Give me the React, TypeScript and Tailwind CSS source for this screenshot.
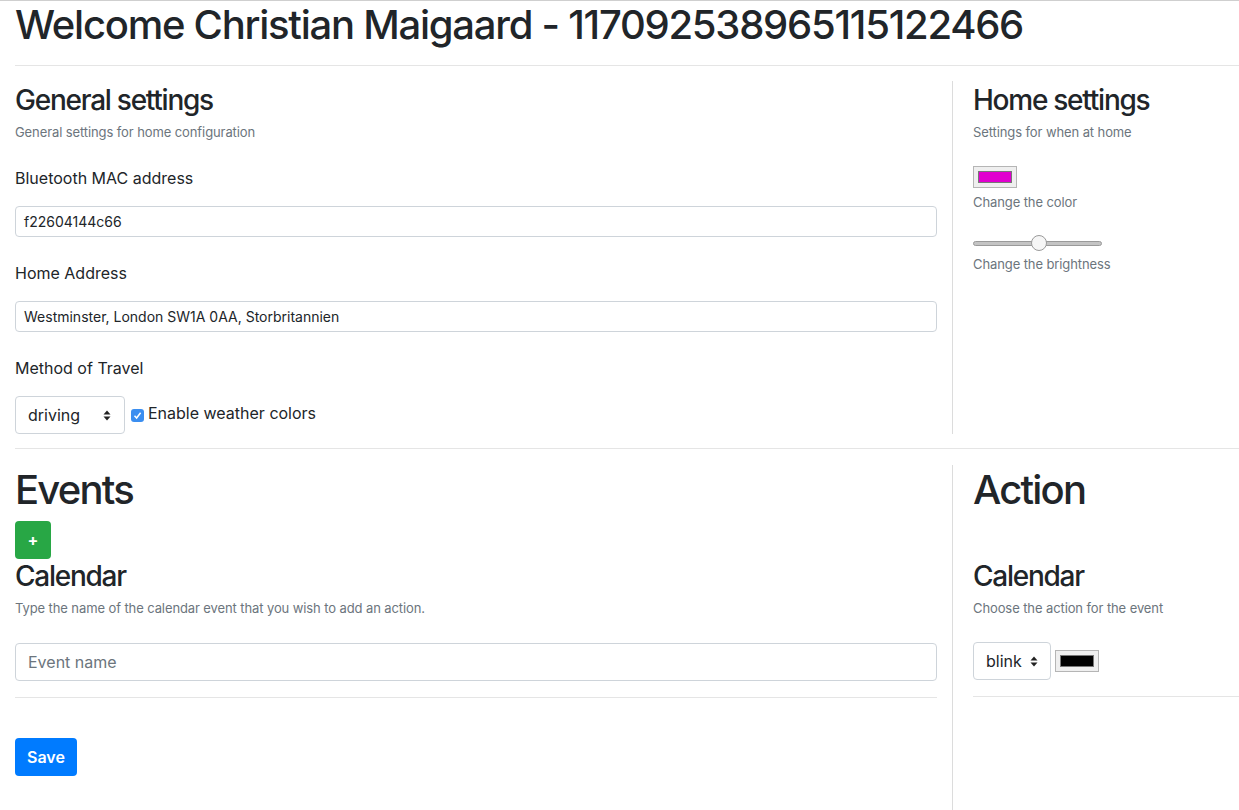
import React from 'react';

const font = { fontFamily: 'Inter, "Noto Sans", sans-serif' };

function Divider({ className = '' }: { className?: string }) {
  return <div className={`h-px bg-[#e5e5e5] ${className}`} />;
}

function ColorSwatch({ color }: { color: string }) {
  return (
    <div className="flex h-[22px] w-[44px] items-center justify-center border border-[#b5b5b5] bg-[#efefef]">
      <div className={`h-[12px] w-[34px] border border-[#777] ${color}`} />
    </div>
  );
}

function UpDown() {
  return (
    <svg width="8" height="11" viewBox="0 0 8 11" className="text-[#222]">
      <path d="M4 0.5 L7.5 4.5 H0.5 Z" fill="currentColor" />
      <path d="M4 10.5 L7.5 6.5 H0.5 Z" fill="currentColor" />
    </svg>
  );
}

export default function App() {
  return (
    <div className="min-h-[810px] border-t border-[#cfcfcf] bg-white text-[#212529]" style={font}>
      <h1 className="px-[15px] text-[40px] leading-[48px] font-medium tracking-[-1.25px]">
        Welcome Christian Maigaard - 117092538965115122466
      </h1>
      <Divider className="ml-[15px] mt-[16px]" />

      <div className="mt-[15px] flex">
        <div className="w-[952px] shrink-0 px-[15px] pt-[2px]">
          <h3 className="text-[28px] leading-[34px] font-medium tracking-[-1.25px]">General settings</h3>
          <p className="mt-[5px] text-[13px] leading-[20px] tracking-[-0.1px] text-[#6c757d]">General settings for home configuration</p>

          <label className="mt-[24px] block text-[16px] leading-[24px]">Bluetooth MAC address</label>
          <div className="mt-[16px] flex h-[31px] items-center rounded-[4px] border border-[#ced4da] px-[8px] text-[14px]">
            f22604144c66
          </div>

          <label className="mt-[24px] block text-[16px] leading-[24px]">Home Address</label>
          <div className="mt-[16px] flex h-[31px] items-center rounded-[4px] border border-[#ced4da] px-[8px] text-[14px]">
            Westminster, London SW1A 0AA, Storbritannien
          </div>

          <label className="mt-[24px] block text-[16px] leading-[24px]">Method of Travel</label>
          <div className="mt-[16px] flex items-center">
            <div className="flex h-[38px] w-[110px] items-center justify-between rounded-[4px] border border-[#ced4da] pl-[12px] pr-[13px] text-[16px]">
              <span>driving</span>
              <UpDown />
            </div>
            <span className="ml-[6px] flex h-[13px] w-[13px] items-center justify-center rounded-[3px] bg-[#3b8ef0]">
              <svg width="9" height="9" viewBox="0 0 9 9">
                <path d="M1.5 4.8 L3.6 7 L7.6 1.8" fill="none" stroke="white" strokeWidth="1.5" />
              </svg>
            </span>
            <span className="ml-[4px] -mt-[4px] text-[16px]">Enable weather colors</span>
          </div>
        </div>

        <div className="flex-1 border-l border-[#dcdcdc] pl-[20px] pt-[2px] pb-[2px]">
          <h3 className="text-[28px] leading-[34px] font-medium tracking-[-1.25px] whitespace-nowrap">Home settings</h3>
          <p className="mt-[5px] text-[13px] leading-[20px] tracking-[-0.1px] text-[#6c757d]">Settings for when at home</p>
          <div className="mt-[24px]">
            <ColorSwatch color="bg-[#e100cf]" />
          </div>
          <p className="mt-[4px] text-[13px] leading-[20px] tracking-[-0.1px] text-[#6c757d]">Change the color</p>
          <div className="relative mt-[23px] flex h-[16px] w-[129px] items-center">
            <div className="h-[5px] w-full rounded-full border border-[#9a9a9a] bg-[#c4c4c4]" />
            <div className="absolute left-[58px] top-0 h-[16px] w-[16px] rounded-full border border-[#9a9a9a] bg-[#f6f6f6]" />
          </div>
          <p className="mt-[3px] text-[13px] leading-[20px] tracking-[-0.1px] text-[#6c757d]">Change the brightness</p>
        </div>
      </div>

      <Divider className="ml-[15px] mt-[14px]" />

      <div className="mt-[16px] flex">
        <div className="w-[952px] shrink-0 px-[15px] pt-[1px] pb-[34px]">
          <h1 className="text-[40px] leading-[48px] font-medium tracking-[-1.8px]">Events</h1>
          <button className="mt-[7px] flex h-[38px] w-[36px] items-center justify-center rounded-[4px] bg-[#28a745] text-[16px] font-bold text-white">
            +
          </button>
          <h3 className="text-[28px] leading-[34px] font-medium tracking-[-1.25px]">Calendar</h3>
          <p className="mt-[5px] text-[13px] leading-[20px] tracking-[-0.1px] text-[#6c757d]">
            Type the name of the calendar event that you wish to add an action.
          </p>
          <div className="mt-[25px] flex h-[38px] items-center rounded-[4px] border border-[#ced4da] px-[12px] text-[16px] text-[#6c757d]">
            Event name
          </div>
          <Divider className="mt-[16px]" />
          <button className="mt-[40px] h-[38px] rounded-[4px] bg-[#007bff] px-[12px] text-[16px] font-semibold text-white">
            Save
          </button>
        </div>

        <div className="flex-1 border-l border-[#dcdcdc] pl-[20px] pt-[1px]">
          <h1 className="text-[40px] leading-[48px] font-medium tracking-[-1.8px]">Action</h1>
          <h3 className="mt-[45px] text-[28px] leading-[34px] font-medium tracking-[-1.25px]">Calendar</h3>
          <p className="mt-[5px] text-[13px] leading-[20px] tracking-[-0.1px] text-[#6c757d] whitespace-nowrap">Choose the action for the event</p>
          <div className="mt-[24px] flex items-center gap-[4px]">
            <div className="flex h-[38px] w-[78px] items-center justify-between rounded-[4px] border border-[#ced4da] pl-[12px] pr-[12px] text-[16px]">
              <span>blink</span>
              <UpDown />
            </div>
            <ColorSwatch color="bg-black" />
          </div>
          <Divider className="mt-[16px]" />
        </div>
      </div>
    </div>
  );
}
